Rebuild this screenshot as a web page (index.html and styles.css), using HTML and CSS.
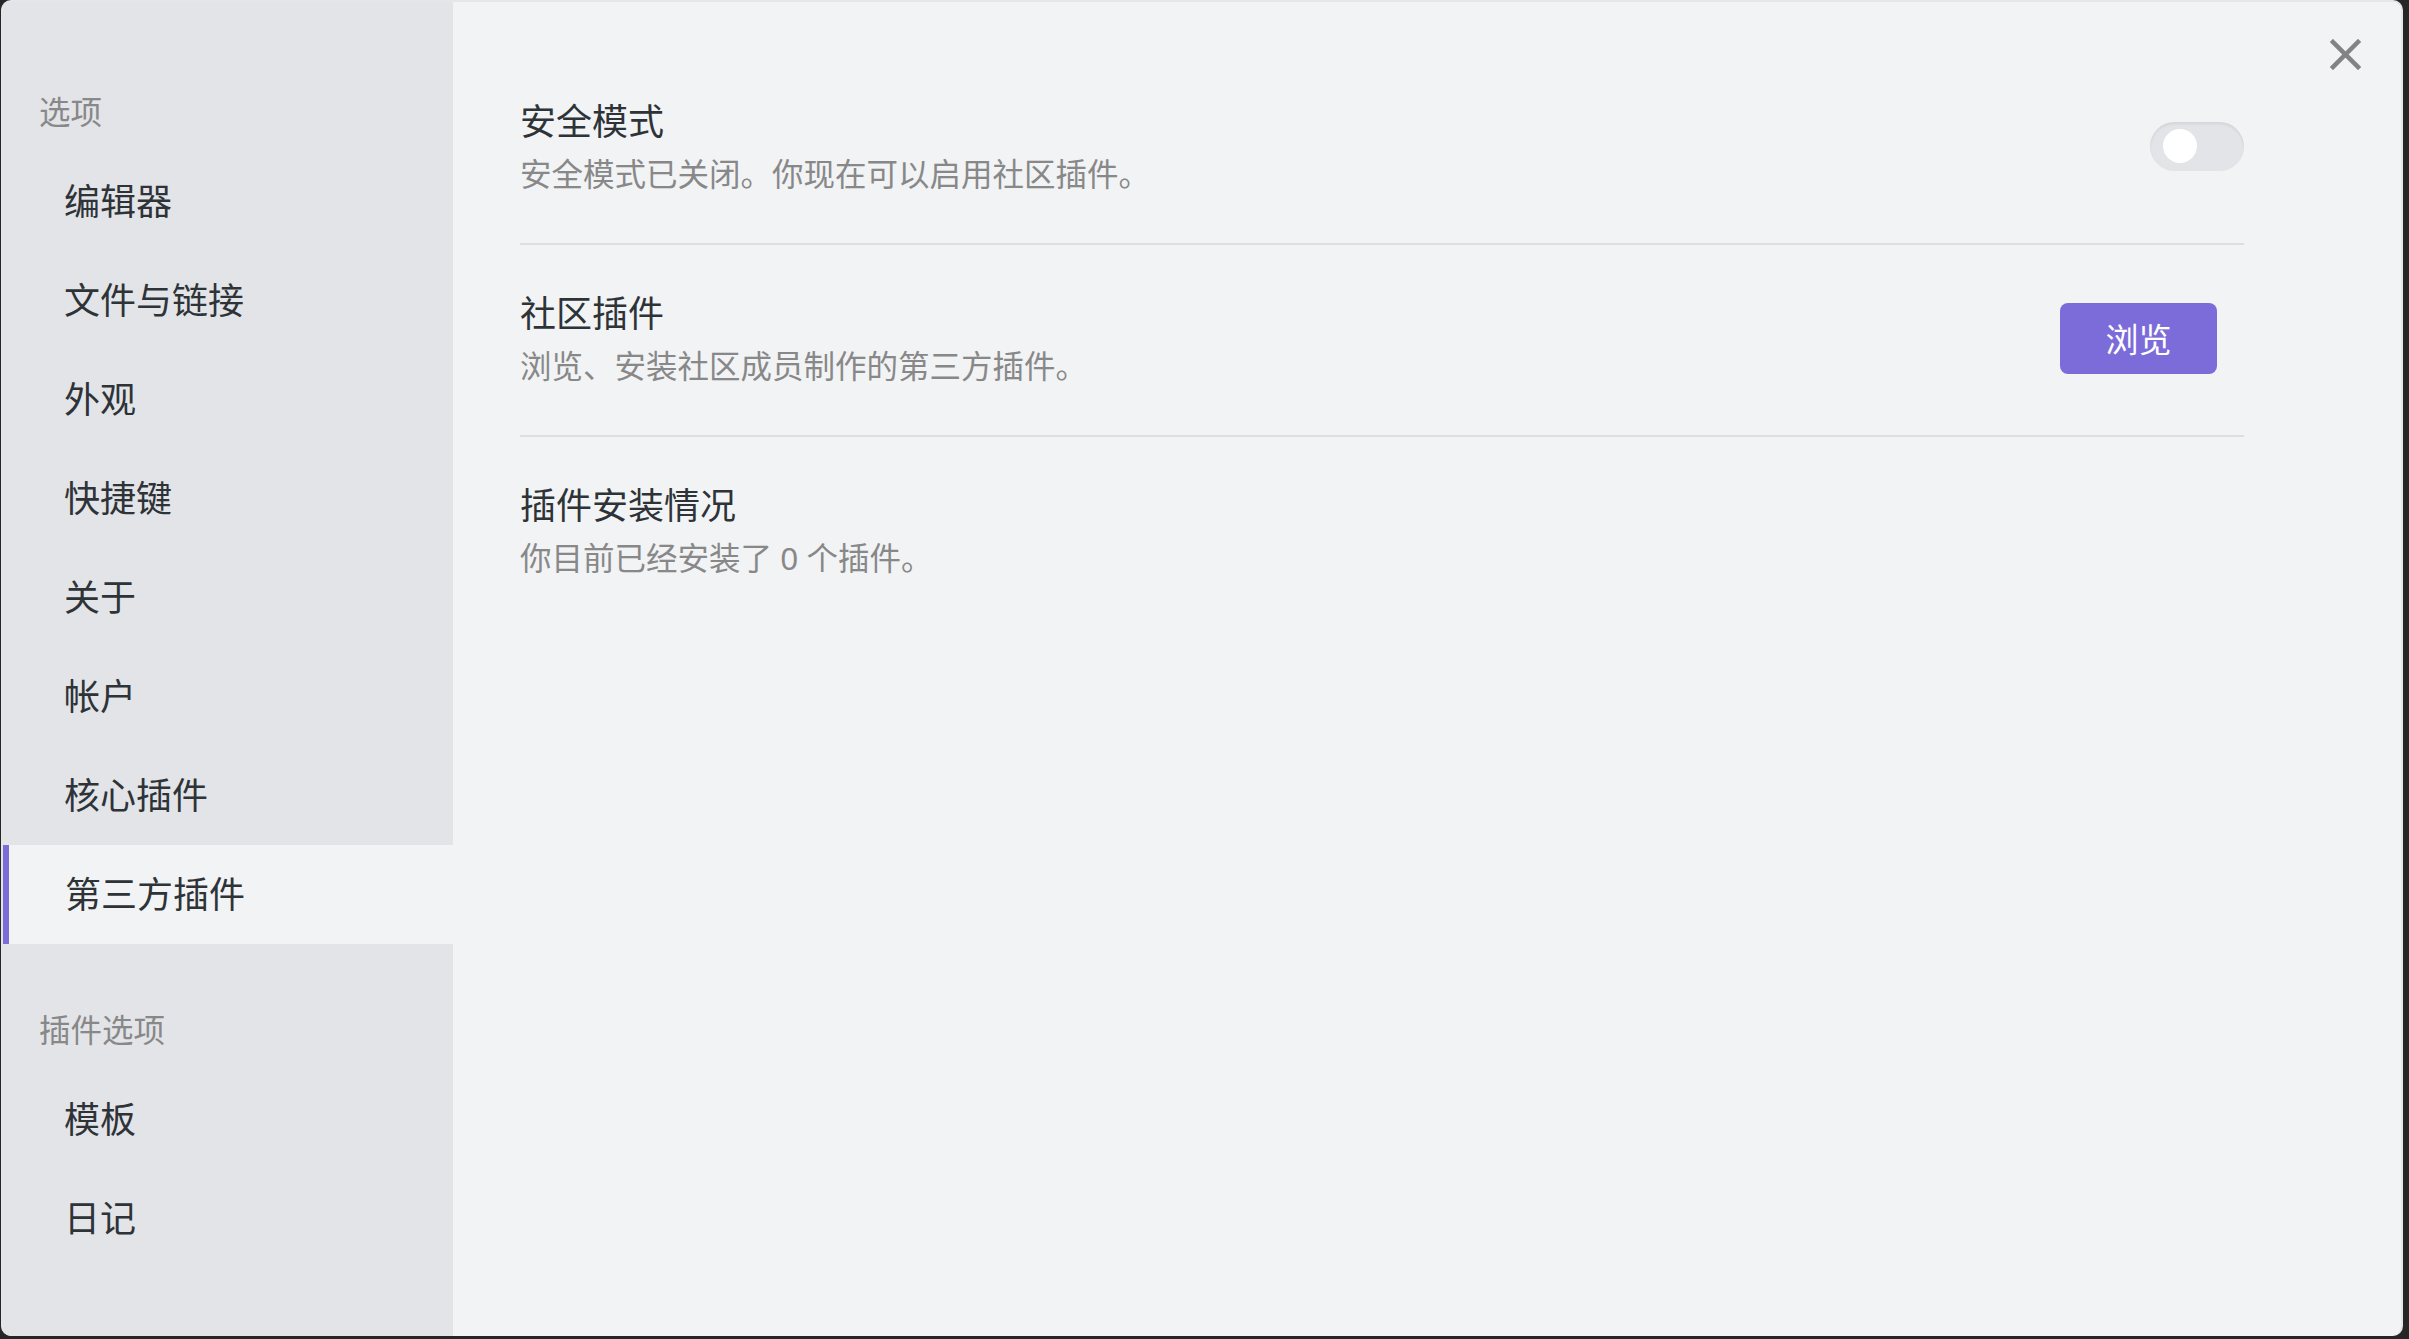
FILE: index.html
```html
<!DOCTYPE html>
<html lang="zh-CN">
<head>
    <meta charset="UTF-8">
    <meta name="viewport" content="width=device-width, initial-scale=1.0">
    <title>设置 - 第三方插件</title>
    <link rel="stylesheet" href="styles.css">
</head>
<body>
    <div class="modal">
        <button class="modal-close" aria-label="关闭">
            <svg width="31" height="31" viewBox="0 0 31 31" fill="none" stroke="currentColor" stroke-width="4.5" stroke-linecap="square">
                <line x1="3" y1="3" x2="28" y2="28"></line>
                <line x1="28" y1="3" x2="3" y2="28"></line>
            </svg>
        </button>

        <nav class="sidebar">
            <div class="tab-group">
                <div class="group-title">选项</div>
                <div class="tab">编辑器</div>
                <div class="tab">文件与链接</div>
                <div class="tab">外观</div>
                <div class="tab">快捷键</div>
                <div class="tab">关于</div>
                <div class="tab">帐户</div>
                <div class="tab">核心插件</div>
                <div class="tab is-active">第三方插件</div>
            </div>
            <div class="tab-group">
                <div class="group-title">插件选项</div>
                <div class="tab">模板</div>
                <div class="tab">日记</div>
            </div>
        </nav>

        <main class="content">
            <div class="setting-item">
                <div class="setting-info">
                    <div class="setting-name">安全模式</div>
                    <div class="setting-desc">安全模式已关闭。你现在可以启用社区插件。</div>
                </div>
                <div class="setting-control">
                    <div class="toggle"><span class="knob"></span></div>
                </div>
            </div>

            <div class="setting-item">
                <div class="setting-info">
                    <div class="setting-name">社区插件</div>
                    <div class="setting-desc">浏览、安装社区成员制作的第三方插件。</div>
                </div>
                <div class="setting-control">
                    <button class="btn-cta">浏览</button>
                </div>
            </div>

            <div class="setting-item no-border">
                <div class="setting-info">
                    <div class="setting-name">插件安装情况</div>
                    <div class="setting-desc">你目前已经安装了 0 个插件。</div>
                </div>
            </div>
        </main>
    </div>
</body>
</html>
```

FILE: styles.css
```css
:root {
    --accent: #7b6cd9;
    --text-normal: #2e3338;
    --text-muted: #888888;
    --bg-primary: #f2f3f5;
    --bg-secondary: #e3e4e8;
    --border: #dddee1;
}

* {
    margin: 0;
    padding: 0;
    box-sizing: border-box;
}

body {
    font-family: "Noto Sans", "Noto Sans CJK SC", sans-serif;
    background: #262626;
    color: var(--text-normal);
    width: 2409px;
    height: 1339px;
    padding: 0 6px 3px 1px;
    overflow: hidden;
}

.modal {
    position: relative;
    display: flex;
    height: 100%;
    background: var(--bg-primary);
    border: 2px solid #e6e6e9;
    border-left-width: 1px;
    border-bottom: none;
    border-radius: 10px;
    overflow: hidden;
}

.modal-close {
    position: absolute;
    top: 37px;
    right: 40px;
    width: 31px;
    height: 31px;
    border: none;
    background: none;
    color: #838383;
    cursor: pointer;
}

.modal-close svg {
    display: block;
}

/* sidebar */
.sidebar {
    width: 451px;
    flex-shrink: 0;
    background: var(--bg-secondary);
    padding-top: 24px;
}

.group-title {
    font-size: 31.5px;
    line-height: 47px;
    color: var(--text-muted);
    padding: 62px 0 17px 37px;
}

.tab {
    font-size: 36px;
    line-height: 54px;
    padding: 22.5px 0 22.5px 62px;
    color: var(--text-normal);
    cursor: pointer;
}

.tab.is-active {
    background: var(--bg-primary);
    border-left: 6px solid var(--accent);
    padding-left: 56px;
    margin-left: 1px;
}

/* content */
.content {
    flex: 1;
    padding: 51px 157px 0 67px;
}

.setting-item {
    display: flex;
    align-items: center;
    padding: 42px 0 46px;
    border-bottom: 2px solid var(--border);
}

.setting-item.no-border {
    border-bottom: none;
}

.setting-info {
    flex: 1;
}

.setting-name {
    font-size: 36px;
    line-height: 54px;
}

.setting-desc {
    font-size: 31.5px;
    line-height: 47px;
    margin-top: 1px;
    color: var(--text-muted);
}

.setting-control {
    display: flex;
    align-items: center;
}

.toggle {
    position: relative;
    width: 94px;
    height: 49px;
    border-radius: 25px;
    background: var(--bg-secondary);
    box-shadow: inset 0 2px 3px rgba(0, 0, 0, 0.07);
}

.knob {
    position: absolute;
    top: 7.5px;
    left: 13px;
    width: 34px;
    height: 34px;
    border-radius: 50%;
    background: #ffffff;
}

.btn-cta {
    width: 157px;
    height: 71px;
    margin-right: 27px;
    border: none;
    border-radius: 8px;
    background: var(--accent);
    color: #ffffff;
    font-family: inherit;
    font-size: 33px;
    cursor: pointer;
}
```
